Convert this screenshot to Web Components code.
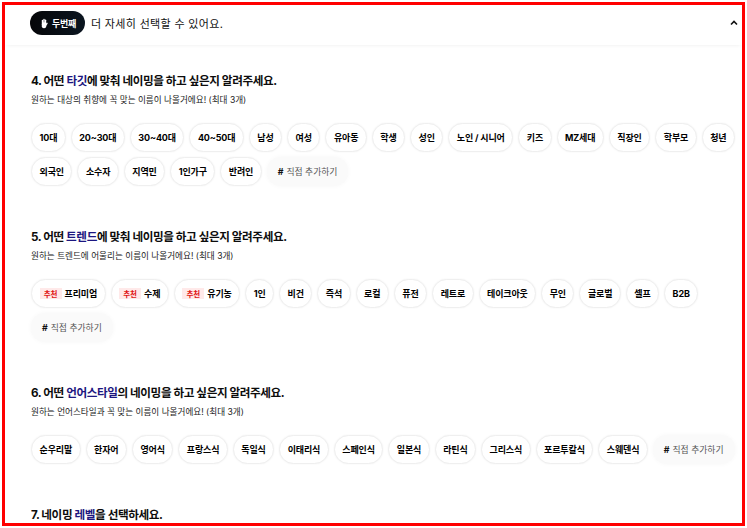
<!DOCTYPE html>
<html lang="ko">
<head>
<meta charset="utf-8">
<title>네이밍</title>
<style>
  html, body { margin: 0; background: #fff; }
  body { font-family: Inter, "Noto Sans CJK KR", sans-serif; color: #111; overflow: hidden; }
</style>
</head>
<body>
<app-frame>
  <step-header step="두번째">더 자세히 선택할 수 있어요.</step-header>
  <question-section>
    <span slot="title">4. 어떤 <b>타깃</b>에 맞춰 네이밍을 하고 싶은지 알려주세요.</span>
    <span slot="sub">원하는 대상의 취향에 꼭 맞는 이름이 나올거에요! (최대 3개)</span>
    <tag-chip>10대</tag-chip><tag-chip>20~30대</tag-chip><tag-chip>30~40대</tag-chip><tag-chip>40~50대</tag-chip>
    <tag-chip>남성</tag-chip><tag-chip>여성</tag-chip><tag-chip>유아동</tag-chip><tag-chip>학생</tag-chip>
    <tag-chip>성인</tag-chip><tag-chip>노인 / 시니어</tag-chip><tag-chip>키즈</tag-chip><tag-chip>MZ세대</tag-chip>
    <tag-chip>직장인</tag-chip><tag-chip>학부모</tag-chip><tag-chip>청년</tag-chip><tag-chip>외국인</tag-chip>
    <tag-chip>소수자</tag-chip><tag-chip>지역민</tag-chip><tag-chip>1인가구</tag-chip><tag-chip>반려인</tag-chip>
    <add-chip></add-chip>
  </question-section>
  <question-section>
    <span slot="title">5. 어떤 <b>트렌드</b>에 맞춰 네이밍을 하고 싶은지 알려주세요.</span>
    <span slot="sub">원하는 트렌드에 어울리는 이름이 나올거에요! (최대 3개)</span>
    <tag-chip recommended>프리미엄</tag-chip><tag-chip recommended>수제</tag-chip><tag-chip recommended>유기농</tag-chip>
    <tag-chip>1인</tag-chip><tag-chip>비건</tag-chip><tag-chip>즉석</tag-chip><tag-chip>로컬</tag-chip>
    <tag-chip>퓨전</tag-chip><tag-chip>레트로</tag-chip><tag-chip>테이크아웃</tag-chip><tag-chip>무인</tag-chip>
    <tag-chip>글로벌</tag-chip><tag-chip>셀프</tag-chip><tag-chip>B2B</tag-chip>
    <add-chip></add-chip>
  </question-section>
  <question-section>
    <span slot="title">6. 어떤 <b>언어스타일</b>의 네이밍을 하고 싶은지 알려주세요.</span>
    <span slot="sub">원하는 언어스타일과 꼭 맞는 이름이 나올거에요! (최대 3개)</span>
    <tag-chip>순우리말</tag-chip><tag-chip>한자어</tag-chip><tag-chip>영어식</tag-chip><tag-chip>프랑스식</tag-chip>
    <tag-chip>독일식</tag-chip><tag-chip>이태리식</tag-chip><tag-chip>스페인식</tag-chip><tag-chip>일본식</tag-chip>
    <tag-chip>라틴식</tag-chip><tag-chip>그리스식</tag-chip><tag-chip>포르투칼식</tag-chip><tag-chip>스웨덴식</tag-chip>
    <add-chip></add-chip>
  </question-section>
  <question-section>
    <span slot="title">7. 네이밍 <b>레벨</b>을 선택하세요.</span>
  </question-section>
</app-frame>

<script>
class AppFrame extends HTMLElement {
  constructor() {
    super();
    this.attachShadow({ mode: 'open' }).innerHTML = `
      <style>
        :host {
          display: block;
          box-sizing: border-box;
          width: 743px;
          height: 524px;
          margin: 2px;
          border: 3px solid #ff0000;
          overflow: hidden;
          background: #fff;
        }
      </style>
      <slot></slot>`;
  }
}

class StepHeader extends HTMLElement {
  constructor() {
    super();
    const step = this.getAttribute('step');
    this.attachShadow({ mode: 'open' }).innerHTML = `
      <style>
        :host {
          display: flex;
          align-items: center;
          height: 40px;
          box-sizing: border-box;
          padding: 0 4px 4px 25px;
          box-shadow: 0 2px 4px -2px rgba(0,0,0,.08);
        }
        .pill {
          display: flex;
          align-items: center;
          justify-content: center;
          gap: 3px;
          width: 55px;
          height: 24px;
          border-radius: 12px;
          background: linear-gradient(90deg, #050608, #0b1520);
          color: #fff;
          font-size: 9px;
          font-weight: 700;
          letter-spacing: -.2px;
        }
        svg { display: block; }
        .text { margin-left: 6px; font-size: 11px; letter-spacing: .33px; color: #111; }
        .chevron { margin-left: auto; }
      </style>
      <span class="pill">
        <svg width="10" height="11" viewBox="0 0 10 11" fill="#fff">
          <rect x="2.800" y="1.800" width="1.400" height="5" rx=".7"/>
          <rect x="4.300" y=".8" width="1.400" height="5" rx=".7"/>
          <rect x="5.800" y="1.600" width="1.400" height="5" rx=".7"/>
          <rect x="2.800" y="4.200" width="4.400" height="6" rx="2"/>
          <path d="M6.500 7.500 8 5.300" stroke="#fff" stroke-width="1.400" stroke-linecap="round"/>
        </svg>
        <span>${step}</span>
      </span>
      <span class="text"><slot></slot></span>
      <svg class="chevron" width="8" height="6" viewBox="0 0 8 6"><path d="M1 4.500 4 1.500l3 3" fill="none" stroke="#111" stroke-width="1.600"/></svg>`;
  }
}

class QuestionSection extends HTMLElement {
  constructor() {
    super();
    this.attachShadow({ mode: 'open' }).innerHTML = `
      <style>
        :host { display: block; padding: 28px 0 15px 26px; }
        .title { font-size: 11.6px; line-height: 16px; font-weight: 700; letter-spacing: -.4px; color: #0c0c0c; }
        ::slotted(span[slot="title"]) { display: block; }
        .sub { margin-top: 5px; font-size: 8.6px; line-height: 12px; color: #222; }
        .chips { display: flex; flex-wrap: wrap; gap: 5px; margin-top: 17px; }
      </style>
      <div class="title"><slot name="title"></slot></div>
      <div class="sub"><slot name="sub"></slot></div>
      <div class="chips"><slot></slot></div>`;
  }
  connectedCallback() {
    this.querySelectorAll('b').forEach(b => {
      b.style.color = '#1c1680';
      b.style.fontWeight = '700';
    });
  }
}

class TagChip extends HTMLElement {
  constructor() {
    super();
    const badge = this.hasAttribute('recommended') ? '<span class="badge">추천</span>' : '';
    this.attachShadow({ mode: 'open' }).innerHTML = `
      <style>
        :host {
          display: inline-flex;
          align-items: center;
          gap: 3px;
          box-sizing: border-box;
          height: 29px;
          padding: 0 7.500px;
          border: 1px solid #efefef;
          border-radius: 14.5px;
          background: #fff;
          font-size: 9px;
          font-weight: 700;
          letter-spacing: -.15px;
          color: #000;
          white-space: nowrap;
          box-shadow: 0 0 2px rgba(0,0,0,.06);
        }
        .badge {
          display: inline-flex;
          align-items: center;
          justify-content: center;
          width: 22px;
          height: 11px;
          background: #ffe9e9;
          color: #e01515;
          font-size: 7.500px;
          font-weight: 700;
        }
      </style>
      ${badge}<slot></slot>`;
  }
}

class AddChip extends HTMLElement {
  constructor() {
    super();
    this.attachShadow({ mode: 'open' }).innerHTML = `
      <style>
        :host {
          display: inline-flex;
          align-items: center;
          box-sizing: border-box;
          height: 29px;
          padding: 0 11px;
          border-radius: 14.5px;
          background: #fafafa;
          box-shadow: 0 0 5px #f6f6f6;
          font-size: 8.8px;
          color: #555;
          white-space: nowrap;
        }
        i { font-style: normal; font-weight: 700; color: #111; margin-right: 3px; }
      </style>
      <i>#</i>직접 추가하기`;
  }
}

customElements.define('app-frame', AppFrame);
customElements.define('step-header', StepHeader);
customElements.define('question-section', QuestionSection);
customElements.define('tag-chip', TagChip);
customElements.define('add-chip', AddChip);
</script>
</body>
</html>
